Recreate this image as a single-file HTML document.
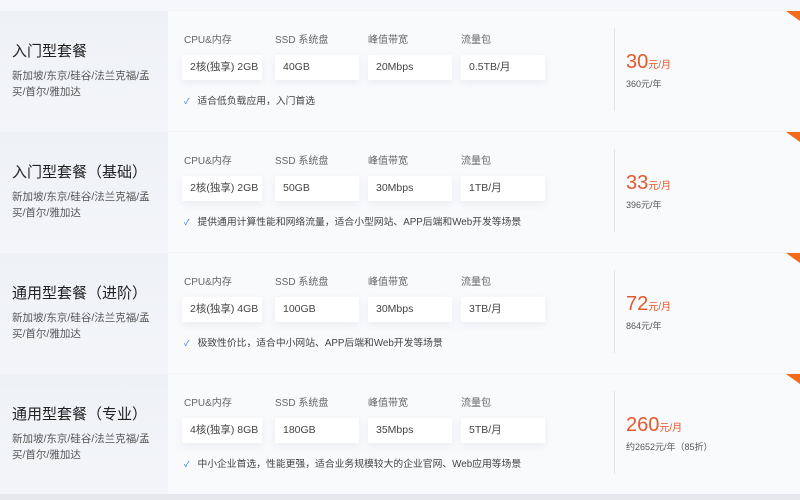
<!DOCTYPE html><html><head><meta charset="utf-8"><style>
*{margin:0;padding:0;box-sizing:border-box}
body{width:800px;height:500px;overflow:hidden;background:#f3f5f8;font-family:"Liberation Sans","Noto Sans CJK SC",sans-serif;position:relative}
.row{position:absolute;left:0;width:800px;height:120px;background:#f9fafc;overflow:hidden}
.left{position:absolute;left:0;top:0;width:168px;height:120px;background:linear-gradient(180deg,#eef1f6,#f3f5f9)}
.t{position:absolute;left:12px;top:29px;font-size:15px;color:#222}
.loc{position:absolute;left:12px;top:57px;font-size:10.5px;line-height:16px;color:#555;width:150px}
.lab{position:absolute;top:20px;font-size:10px;color:#666}
.box{position:absolute;top:44px;height:25px;background:#fff;font-size:10.5px;color:#444;line-height:25px;padding-left:8px;box-shadow:0 3px 8px rgba(150,160,180,.15)}
.chk{position:absolute;left:184px;top:82px;font-size:9.8px;color:#444}
.chk b{color:#2f6fd6;font-weight:normal;margin-right:8px;font-size:8px}
.div{position:absolute;left:614px;top:17px;width:1px;height:83px;background:#e3e5ea}
.p{position:absolute;left:626px;top:40px;color:#e5582e;font-size:20px}
.p span{font-size:10px}
.s{position:absolute;left:626px;top:66px;font-size:9px;color:#555}
.tri{position:absolute;right:0;top:0;width:0;height:0;border-left:14px solid transparent;border-top:10px solid #f26a1b}
</style></head><body>
<div style="position:absolute;left:0;top:0;width:800px;height:10px;background:#f6f7fa"></div>
<div style="position:absolute;left:0;top:494px;width:800px;height:6px;background:#e6e8ee"></div>

<div class="row" style="top:11px"><div class="left"></div>
<div class="t">入门型套餐</div><div class="loc">新加坡/东京/硅谷/法兰克福/孟买/首尔/雅加达</div>
<div class="lab" style="left:184px">CPU&amp;内存</div><div class="lab" style="left:275px">SSD 系统盘</div><div class="lab" style="left:368px">峰值带宽</div><div class="lab" style="left:461px">流量包</div>
<div class="box" style="left:182px;width:80px">2核(独享) 2GB</div><div class="box" style="left:275px;width:84px">40GB</div><div class="box" style="left:368px;width:84px">20Mbps</div><div class="box" style="left:461px;width:84px">0.5TB/月</div>
<div class="chk"><b>✓</b>适合低负载应用，入门首选</div>
<div class="div"></div><div class="p">30<span>元/月</span></div><div class="s">360元/年</div><div class="tri"></div></div>

<div class="row" style="top:132px"><div class="left"></div>
<div class="t">入门型套餐（基础）</div><div class="loc">新加坡/东京/硅谷/法兰克福/孟买/首尔/雅加达</div>
<div class="lab" style="left:184px">CPU&amp;内存</div><div class="lab" style="left:275px">SSD 系统盘</div><div class="lab" style="left:368px">峰值带宽</div><div class="lab" style="left:461px">流量包</div>
<div class="box" style="left:182px;width:80px">2核(独享) 2GB</div><div class="box" style="left:275px;width:84px">50GB</div><div class="box" style="left:368px;width:84px">30Mbps</div><div class="box" style="left:461px;width:84px">1TB/月</div>
<div class="chk"><b>✓</b>提供通用计算性能和网络流量，适合小型网站、APP后端和Web开发等场景</div>
<div class="div"></div><div class="p">33<span>元/月</span></div><div class="s">396元/年</div><div class="tri"></div></div>

<div class="row" style="top:253px"><div class="left"></div>
<div class="t">通用型套餐（进阶）</div><div class="loc">新加坡/东京/硅谷/法兰克福/孟买/首尔/雅加达</div>
<div class="lab" style="left:184px">CPU&amp;内存</div><div class="lab" style="left:275px">SSD 系统盘</div><div class="lab" style="left:368px">峰值带宽</div><div class="lab" style="left:461px">流量包</div>
<div class="box" style="left:182px;width:80px">2核(独享) 4GB</div><div class="box" style="left:275px;width:84px">100GB</div><div class="box" style="left:368px;width:84px">30Mbps</div><div class="box" style="left:461px;width:84px">3TB/月</div>
<div class="chk"><b>✓</b>极致性价比，适合中小网站、APP后端和Web开发等场景</div>
<div class="div"></div><div class="p">72<span>元/月</span></div><div class="s">864元/年</div><div class="tri"></div></div>

<div class="row" style="top:374px"><div class="left"></div>
<div class="t">通用型套餐（专业）</div><div class="loc">新加坡/东京/硅谷/法兰克福/孟买/首尔/雅加达</div>
<div class="lab" style="left:184px">CPU&amp;内存</div><div class="lab" style="left:275px">SSD 系统盘</div><div class="lab" style="left:368px">峰值带宽</div><div class="lab" style="left:461px">流量包</div>
<div class="box" style="left:182px;width:80px">4核(独享) 8GB</div><div class="box" style="left:275px;width:84px">180GB</div><div class="box" style="left:368px;width:84px">35Mbps</div><div class="box" style="left:461px;width:84px">5TB/月</div>
<div class="chk"><b>✓</b>中小企业首选，性能更强，适合业务规模较大的企业官网、Web应用等场景</div>
<div class="div"></div><div class="p">260<span>元/月</span></div><div class="s">约2652元/年（85折）</div><div class="tri"></div></div>
</body></html>
